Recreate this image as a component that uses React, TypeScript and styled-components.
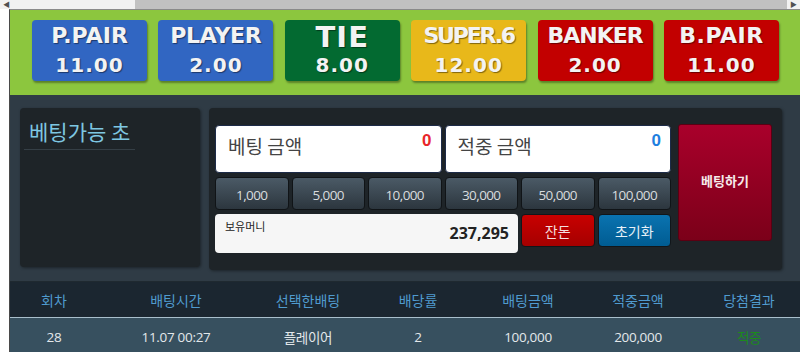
import React from "react";
import styled, { createGlobalStyle } from "styled-components";

const Global = createGlobalStyle`
  html, body { margin: 0; padding: 0; background: #fff; }
  body { font-family: "Noto Sans CJK KR", "Noto Sans", sans-serif; }
  * { box-sizing: border-box; }
`;

const Page = styled.div`
  width: 800px;
  height: 352px;
  overflow: hidden;
  display: flex;
  flex-direction: column;
`;

const ScrollBar = styled.div`
  height: 9px;
  flex-shrink: 0;
  display: flex;
  align-items: stretch;
  background: #f1f1f1;
`;

const Arrow = styled.div`
  width: 13px;
  display: flex;
  align-items: center;
  justify-content: center;
  font-size: 7px;
  color: #505050;
  line-height: 1;
`;

const Track = styled.div`
  flex: 1;
  display: flex;
`;

const TrackPart = styled.div<{ $w: number; $thumb?: boolean }>`
  width: ${(p) => p.$w}px;
  background: ${(p) => (p.$thumb ? "#c1c1c1" : "#f1f1f1")};
`;

const Main = styled.div`
  flex: 1;
  display: flex;
  min-height: 0;
`;

const Gutter = styled.div`
  width: 9px;
  flex-shrink: 0;
  background: #fff;
`;

const Content = styled.div`
  flex: 1;
  display: flex;
  flex-direction: column;
  border-left: 1px solid #4a4a4a;
  border-top: 1px solid #8a8a8a;
  min-width: 0;
  & > * { flex-shrink: 0; }
`;

const OddsBar = styled.div`
  height: 85px;
  background: #8cc63e;
  display: flex;
  gap: 11.4px;
  padding: 10px 0 0 22px;
`;

const OddsButton = styled.div<{ $bg: string }>`
  width: 115px;
  height: 61px;
  flex-shrink: 0;
  border-radius: 4px;
  background: ${(p) => p.$bg};
  box-shadow: 1px 2px 2px rgba(0, 0, 0, 0.35);
  display: flex;
  flex-direction: column;
  align-items: center;
  color: #f3f3f3;
  text-shadow: 1px 1px 1px rgba(0, 0, 0, 0.45);
  font-family: "DejaVu Sans", "Liberation Sans", sans-serif;
  font-weight: bold;
`;

const OddsLabel = styled.div<{ $big?: boolean; $ls: number }>`
  height: 31px;
  display: flex;
  align-items: center;
  padding-top: ${(p) => (p.$big ? "3px" : "0")};
  font-size: ${(p) => (p.$big ? "29px" : "22px")};
  letter-spacing: ${(p) => p.$ls}px;
  white-space: nowrap;
`;

const OddsValue = styled.div`
  font-size: 20px;
  letter-spacing: 1px;
  line-height: 24px;
  margin-top: 2px;
`;

const BetPanel = styled.div`
  height: 187px;
  background: #2f3b45;
  display: flex;
  gap: 9px;
  padding: 13px 0 0 10px;
  border-bottom: 1px solid #1f2930;
`;

const TimerBox = styled.div`
  width: 180px;
  height: 159px;
  background: #1e2428;
  border-radius: 4px;
  padding: 10px 0 0 4px;
  box-shadow: 1px 1px 3px rgba(0, 0, 0, 0.4);
`;

const TimerTitle = styled.div`
  display: inline-block;
  padding: 0 5px 5px 5px;
  border-bottom: 1px solid #353f46;
  color: #7ec7e2;
  font-size: 21px;
  line-height: 26px;
`;

const Controls = styled.div`
  width: 573px;
  height: 162px;
  background: #1e2428;
  border-radius: 4px;
  padding: 16px 0 0 6px;
  display: flex;
  gap: 7px;
  box-shadow: 1px 1px 3px rgba(0, 0, 0, 0.4);
`;

const ControlGrid = styled.div`
  width: 456px;
  display: grid;
  grid-template-columns: repeat(6, 1fr);
  grid-template-rows: 48px 33px 39px;
  column-gap: 3px;
  row-gap: 4px;
  padding-top: 1px;
`;

const AmountBox = styled.div`
  grid-column: span 3;
  background: #fff;
  border: 1px solid #1d2b48;
  border-radius: 4px;
  position: relative;
  display: flex;
  align-items: center;
  padding: 0 0 8px 12px;
  color: #444;
  font-size: 19px;
`;

const AmountValue = styled.span<{ $color: string }>`
  position: absolute;
  right: 9px;
  top: 5px;
  font-family: "Liberation Sans", sans-serif;
  font-weight: bold;
  font-size: 17px;
  color: ${(p) => p.$color};
`;

const Chip = styled.div`
  background: linear-gradient(#4b5a66, #2c363e);
  border: 1px solid #101417;
  border-radius: 4px;
  color: #d8dcdf;
  font-family: "Open Sans", "Noto Sans", sans-serif;
  font-size: 13.5px;
  letter-spacing: -0.6px;
  display: flex;
  align-items: center;
  justify-content: center;
  padding-top: 2px;
`;

const MoneyBox = styled.div`
  grid-column: span 4;
  background: #f6f6f6;
  border-radius: 4px;
  position: relative;
  padding: 4px 0 0 10px;
  font-size: 11px;
  color: #222;
`;

const MoneyValue = styled.span`
  position: absolute;
  right: 9px;
  top: 8px;
  font-family: "Open Sans", "Noto Sans", sans-serif;
  font-weight: bold;
  font-size: 16px;
  color: #222;
`;

const ActionButton = styled.div<{ $variant: "red" | "blue" }>`
  height: 33px;
  border: 1px solid #11161a;
  border-radius: 4px;
  background: ${(p) =>
    p.$variant === "red"
      ? "linear-gradient(#c80000, #a50000)"
      : "linear-gradient(#0a73b0, #005c92)"};
  color: ${(p) => (p.$variant === "red" ? "#f5dede" : "#e6f1f8")};
  font-size: 14px;
  display: flex;
  align-items: center;
  justify-content: center;
`;

const BetButton = styled.div`
  width: 94px;
  height: 117px;
  border-radius: 3px;
  background: linear-gradient(#a9002b, #7b0019);
  border: 1px solid #5a0012;
  color: #f6eaea;
  font-weight: bold;
  font-size: 13px;
  display: flex;
  align-items: center;
  justify-content: center;
  padding-bottom: 4px;
`;

const Table = styled.div`
  display: flex;
  flex-direction: column;
  width: 794px;
`;

const cols = "88px 156px 108px 112px 108px 112px 110px";

const HeadRow = styled.div`
  display: grid;
  grid-template-columns: ${cols};
  height: 36px;
  flex-shrink: 0;
  background: #1b2630;
  border-bottom: 1px solid #a9bfcc;
`;

const HeadCell = styled.div`
  display: flex;
  align-items: center;
  justify-content: center;
  color: #509bcf;
  font-size: 14px;
`;

const DataRow = styled.div`
  display: grid;
  grid-template-columns: ${cols};
  height: 40px;
  flex-shrink: 0;
  background: #37505f;
`;

const DataCell = styled.div<{ $color?: string }>`
  display: flex;
  align-items: center;
  justify-content: center;
  padding-bottom: 2px;
  color: ${(p) => p.$color || "#e3e8eb"};
  font-family: "Open Sans", "Noto Sans CJK KR", sans-serif;
  font-size: 13.5px;
  letter-spacing: -0.3px;
`;

const odds = [
  { label: "P.PAIR", value: "11.00", bg: "#3166c2", ls: 0 },
  { label: "PLAYER", value: "2.00", bg: "#3166c2", ls: -0.3 },
  { label: "TIE", value: "8.00", bg: "#036a31", big: true, ls: 1 },
  { label: "SUPER.6", value: "12.00", bg: "#e8b81a", ls: -2.2 },
  { label: "BANKER", value: "2.00", bg: "#c20000", ls: -1 },
  { label: "B.PAIR", value: "11.00", bg: "#c20000", ls: 0.5 },
];

const chips = ["1,000", "5,000", "10,000", "30,000", "50,000", "100,000"];

const headers = ["회차", "배팅시간", "선택한배팅", "배당률", "배팅금액", "적중금액", "당첨결과"];

export default function App() {
  return (
    <Page>
      <Global />
      <ScrollBar>
        <Arrow>◀</Arrow>
        <Track>
          <TrackPart $w={122} />
          <TrackPart $w={652} $thumb />
        </Track>
        <Arrow>▶</Arrow>
      </ScrollBar>
      <Main>
        <Gutter />
        <Content>
          <OddsBar>
            {odds.map((o) => (
              <OddsButton key={o.label} $bg={o.bg}>
                <OddsLabel $big={o.big} $ls={o.ls}>{o.label}</OddsLabel>
                <OddsValue>{o.value}</OddsValue>
              </OddsButton>
            ))}
          </OddsBar>
          <BetPanel>
            <TimerBox>
              <TimerTitle>베팅가능 초</TimerTitle>
            </TimerBox>
            <Controls>
              <ControlGrid>
                <AmountBox>
                  베팅 금액
                  <AmountValue $color="#e8262a">0</AmountValue>
                </AmountBox>
                <AmountBox>
                  적중 금액
                  <AmountValue $color="#1f7fe0">0</AmountValue>
                </AmountBox>
                {chips.map((c) => (
                  <Chip key={c}>{c}</Chip>
                ))}
                <MoneyBox>
                  보유머니
                  <MoneyValue>237,295</MoneyValue>
                </MoneyBox>
                <ActionButton $variant="red">잔돈</ActionButton>
                <ActionButton $variant="blue">초기화</ActionButton>
              </ControlGrid>
              <BetButton>베팅하기</BetButton>
            </Controls>
          </BetPanel>
          <Table>
            <HeadRow>
              {headers.map((h) => (
                <HeadCell key={h}>{h}</HeadCell>
              ))}
            </HeadRow>
            <DataRow>
              <DataCell>28</DataCell>
              <DataCell>11.07 00:27</DataCell>
              <DataCell>플레이어</DataCell>
              <DataCell>2</DataCell>
              <DataCell>100,000</DataCell>
              <DataCell>200,000</DataCell>
              <DataCell $color="#1c8a1c">적중</DataCell>
            </DataRow>
          </Table>
        </Content>
      </Main>
    </Page>
  );
}
